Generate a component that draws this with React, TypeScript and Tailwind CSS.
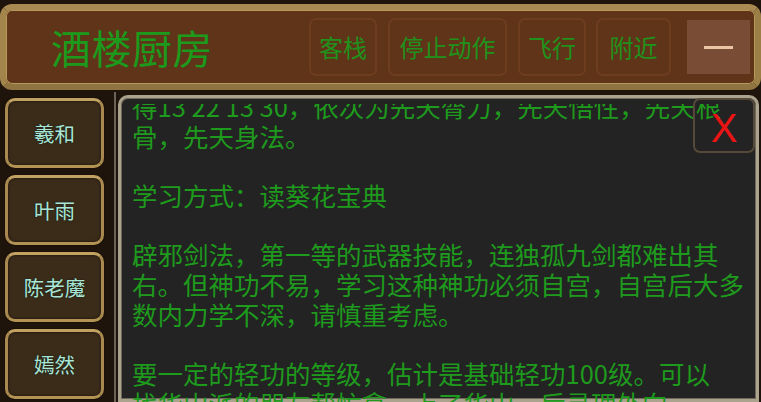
import React from "react";

const lines = [
  "得13 22 13 30，依次为先天膂力，先天悟性，先天根",
  "骨，先天身法。",
  "",
  "学习方式：读葵花宝典",
  "",
  "辟邪剑法，第一等的武器技能，连独孤九剑都难出其",
  "右。但神功不易，学习这种神功必须自宫，自宫后大多",
  "数内力学不深，请慎重考虑。",
  "",
  "要一定的轻功的等级，估计是基础轻功100级。可以",
  "找华山派的朋友帮忙拿，上了华山，后寻理外向...",
];

const people = ["羲和", "叶雨", "陈老魔", "嫣然"];

function TopButton({ label, w }: { label: string; w: string }) {
  return (
    <div
      className={`${w} h-[58px] flex items-center justify-center rounded-[7px] border-2 border-[#6e3d1f] text-[24px] leading-none text-[#1f921c]`}
    >
      {label}
    </div>
  );
}

export default function App() {
  return (
    <div className="w-[761px] h-[402px] overflow-hidden bg-[#1e140b] flex flex-col font-['Noto_Sans_CJK_SC','Noto_Sans',sans-serif]">
      {/* header */}
      <div className="mt-[4px] h-[86px] shrink-0 rounded-[12px] border-[6px] border-t-[#a88a52] border-l-[#a3854c] border-r-[#9c7f47] border-b-[#8f7340] bg-[#5f3419] flex items-center shadow-[inset_0_0_0_1px_#b8995c]">
        <div className="pl-[45px] text-[40px] leading-none text-[#1c9a1c] tracking-[0.5px]">酒楼厨房</div>
        <div className="ml-auto mr-[5px] flex items-center">
          <TopButton label="客栈" w="w-[68px]" />
          <div className="w-[11px]" />
          <TopButton label="停止动作" w="w-[119px]" />
          <div className="w-[11px]" />
          <TopButton label="飞行" w="w-[68px]" />
          <div className="w-[10px]" />
          <TopButton label="附近" w="w-[75px]" />
          <div className="w-[16px]" />
          <div className="w-[63px] h-[54px] bg-[#794d35] flex items-center justify-center">
            <div className="w-[29px] h-[3px] bg-[#ebc6a5]" />
          </div>
        </div>
      </div>

      {/* main */}
      <div className="flex flex-1 min-h-0 pt-[5px]">
        {/* left column */}
        <div className="w-[114px] shrink-0 flex flex-col gap-[7px] pl-[5px] pt-[3px]">
          {people.map((p) => (
            <div
              key={p}
              className="w-[99px] h-[70px] shrink-0 rounded-[10px] border-[3px] border-t-[#c2a263] border-l-[#a9894f] border-r-[#a9894f] border-b-[#b39353] bg-[#3b2c1a] flex items-center justify-center text-[20.5px] text-[#a9e6d6] [text-shadow:0_0_2px_#0d1a16] shadow-[0_0_0_1px_#1a1008,inset_0_0_3px_#1a1008]"
            >
              {p}
            </div>
          ))}
        </div>
        {/* separator */}
        <div className="w-[2px] shrink-0 bg-[#6b6456] -mt-[3px]" />
        <div className="w-[2px] shrink-0" />
        {/* text panel */}
        <div className="relative w-[641px] shrink-0 rounded-tl-[10px] rounded-tr-[10px] border-[3px] border-[#aba38d] bg-[#232323] shadow-[inset_0_0_0_1px_#6f6a5c] pt-[6px]">
          <div className="h-[320px] overflow-hidden pl-[11px]">
            <div className="-mt-[13px] text-[25.5px] leading-[29.7px] text-[#1e9a1d]">
              {lines.map((l, i) => (
                <div key={i} className="h-[29.7px] whitespace-nowrap">
                  {l === "" ? "\u00a0" : l}
                </div>
              ))}
            </div>
          </div>
          {/* close */}
          <div className="absolute top-[0px] right-[1px] w-[62px] h-[55px] rounded-[7px] border-2 border-[#56493a] flex items-center justify-center pt-[5px] text-[40px] leading-none text-[#ea1414] font-['Liberation_Sans',sans-serif]">
            X
          </div>
        </div>
      </div>
    </div>
  );
}
